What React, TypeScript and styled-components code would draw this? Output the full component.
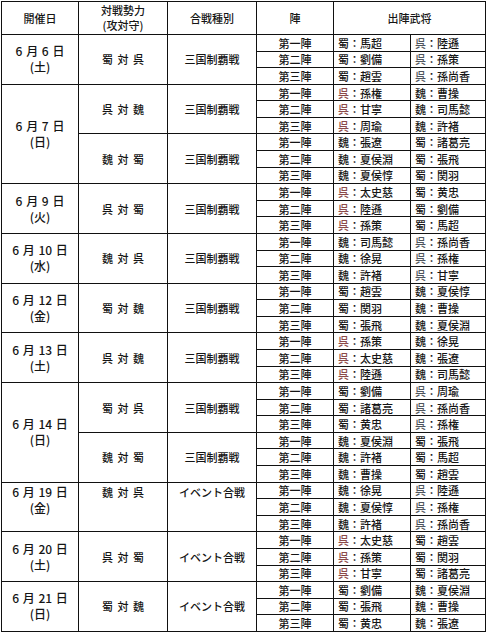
import React from 'react'
import styled, { createGlobalStyle } from 'styled-components'

const Global = createGlobalStyle`
  html, body { margin: 0; padding: 0; background: #fff; }
  body { font-family: "Noto Sans CJK JP", "Liberation Sans", sans-serif; color: #151515; }
`

const Page = styled.div`
  padding: 1px 0 0 1px;
`

const Table = styled.table`
  border-collapse: collapse;
  table-layout: fixed;
  width: 484px;
  font-size: 11px;
  font-weight: 500;
  line-height: 14px;
  td, th { border: 1px solid #111; padding: 0; }
`

const HeadRow = styled.tr`
  height: 33px;
`

const HeadCell = styled.th`
  font-weight: 500;
  text-align: center;
  vertical-align: middle;
  line-height: 15px;
`

const SubRow = styled.tr`
  height: 16.58px;
`

const DateCell = styled.td<{ $top?: boolean }>`
  text-align: center;
  vertical-align: ${p => (p.$top ? 'top' : 'middle')};
  padding-top: ${p => (p.$top ? '1px' : '0')} !important;
  font-size: 12px;
  line-height: 16px;
  word-spacing: 1px;
`

const DateLine = styled.div`
  display: block;
`

const MatchCell = styled.td<{ $top?: boolean }>`
  text-align: center;
  vertical-align: ${p => (p.$top ? 'top' : 'middle')};
  padding-top: ${p => (p.$top ? '1px' : '0')} !important;
  line-height: 16px;
  word-spacing: 2px;
`

const TypeCell = styled(MatchCell)`
  word-spacing: 0;
`

const JinCell = styled.td`
  text-align: center;
  vertical-align: middle;
  line-height: 14px;
  white-space: nowrap;
`

const NameCell = styled.td`
  text-align: left;
  vertical-align: middle;
  padding-left: 4px !important;
  line-height: 14px;
  white-space: nowrap;
`

const Faction = styled.span<{ $tone: 'attack' | 'defend' }>`
  color: ${p => (p.$tone === 'attack' ? '#8c4a4a' : '#50565e')};
`

type Battle = { match: string; type: string; pairs: [string, string][] }
type Day = { date: string; week: string; top?: boolean; battles: Battle[] }

const days: Day[] = [
  { date: '6 月 6 日', week: '(土)', battles: [
    { match: '蜀 対 呉', type: '三国制覇戦', pairs: [['蜀：馬超', '呉：陸遜'], ['蜀：劉備', '呉：孫策'], ['蜀：趙雲', '呉：孫尚香']] },
  ] },
  { date: '6 月 7 日', week: '(日)', battles: [
    { match: '呉 対 魏', type: '三国制覇戦', pairs: [['呉：孫権', '魏：曹操'], ['呉：甘寧', '魏：司馬懿'], ['呉：周瑜', '魏：許褚']] },
    { match: '魏 対 蜀', type: '三国制覇戦', pairs: [['魏：張遼', '蜀：諸葛亮'], ['魏：夏侯淵', '蜀：張飛'], ['魏：夏侯惇', '蜀：関羽']] },
  ] },
  { date: '6 月 9 日', week: '(火)', battles: [
    { match: '呉 対 蜀', type: '三国制覇戦', pairs: [['呉：太史慈', '蜀：黄忠'], ['呉：陸遜', '蜀：劉備'], ['呉：孫策', '蜀：馬超']] },
  ] },
  { date: '6 月 10 日', week: '(水)', battles: [
    { match: '魏 対 呉', type: '三国制覇戦', pairs: [['魏：司馬懿', '呉：孫尚香'], ['魏：徐晃', '呉：孫権'], ['魏：許褚', '呉：甘寧']] },
  ] },
  { date: '6 月 12 日', week: '(金)', battles: [
    { match: '蜀 対 魏', type: '三国制覇戦', pairs: [['蜀：趙雲', '魏：夏侯惇'], ['蜀：関羽', '魏：曹操'], ['蜀：張飛', '魏：夏侯淵']] },
  ] },
  { date: '6 月 13 日', week: '(土)', battles: [
    { match: '呉 対 魏', type: '三国制覇戦', pairs: [['呉：孫策', '魏：徐晃'], ['呉：太史慈', '魏：張遼'], ['呉：陸遜', '魏：司馬懿']] },
  ] },
  { date: '6 月 14 日', week: '(日)', battles: [
    { match: '蜀 対 呉', type: '三国制覇戦', pairs: [['蜀：劉備', '呉：周瑜'], ['蜀：諸葛亮', '呉：孫尚香'], ['蜀：黄忠', '呉：孫権']] },
    { match: '魏 対 蜀', type: '三国制覇戦', pairs: [['魏：夏侯淵', '蜀：張飛'], ['魏：許褚', '蜀：馬超'], ['魏：曹操', '蜀：趙雲']] },
  ] },
  { date: '6 月 19 日', week: '(金)', top: true, battles: [
    { match: '魏 対 呉', type: 'イベント合戦', pairs: [['魏：徐晃', '呉：陸遜'], ['魏：夏侯惇', '呉：孫権'], ['魏：許褚', '呉：孫尚香']] },
  ] },
  { date: '6 月 20 日', week: '(土)', battles: [
    { match: '呉 対 蜀', type: 'イベント合戦', pairs: [['呉：太史慈', '蜀：趙雲'], ['呉：孫策', '蜀：関羽'], ['呉：甘寧', '蜀：諸葛亮']] },
  ] },
  { date: '6 月 21 日', week: '(日)', battles: [
    { match: '蜀 対 魏', type: 'イベント合戦', pairs: [['蜀：劉備', '魏：夏侯淵'], ['蜀：張飛', '魏：曹操'], ['蜀：黄忠', '魏：張遼']] },
  ] },
]

const jin = ['第一陣', '第二陣', '第三陣']

function General({ name, tone }: { name: string; tone: 'attack' | 'defend' }) {
  const side = name[0]
  if (side !== '呉') return <>{name}</>
  return (
    <>
      <Faction $tone={tone}>{side}</Faction>
      {name.slice(1)}
    </>
  )
}

export default function App() {
  return (
    <Page>
      <Global />
      <Table>
        <colgroup>
          <col style={{ width: 77 }} />
          <col style={{ width: 89 }} />
          <col style={{ width: 89 }} />
          <col style={{ width: 77 }} />
          <col style={{ width: 77 }} />
          <col style={{ width: 75 }} />
        </colgroup>
        <thead>
          <HeadRow>
            <HeadCell>開催日</HeadCell>
            <HeadCell>対戦勢力<br />(攻対守)</HeadCell>
            <HeadCell>合戦種別</HeadCell>
            <HeadCell>陣</HeadCell>
            <HeadCell colSpan={2}>出陣武将</HeadCell>
          </HeadRow>
        </thead>
        <tbody>
          {days.map(day =>
            day.battles.map((b, bi) =>
              b.pairs.map((pair, pi) => (
                <SubRow key={`${day.date}-${bi}-${pi}`}>
                  {bi === 0 && pi === 0 && (
                    <DateCell rowSpan={day.battles.length * 3} $top={day.top}>
                      <DateLine>{day.date}</DateLine>
                      <DateLine>{day.week}</DateLine>
                    </DateCell>
                  )}
                  {pi === 0 && (
                    <>
                      <MatchCell rowSpan={3} $top={day.top}>{b.match}</MatchCell>
                      <TypeCell rowSpan={3} $top={day.top}>{b.type}</TypeCell>
                    </>
                  )}
                  <JinCell>{jin[pi]}</JinCell>
                  <NameCell><General name={pair[0]} tone="attack" /></NameCell>
                  <NameCell><General name={pair[1]} tone="defend" /></NameCell>
                </SubRow>
              ))
            )
          )}
        </tbody>
      </Table>
    </Page>
  )
}
